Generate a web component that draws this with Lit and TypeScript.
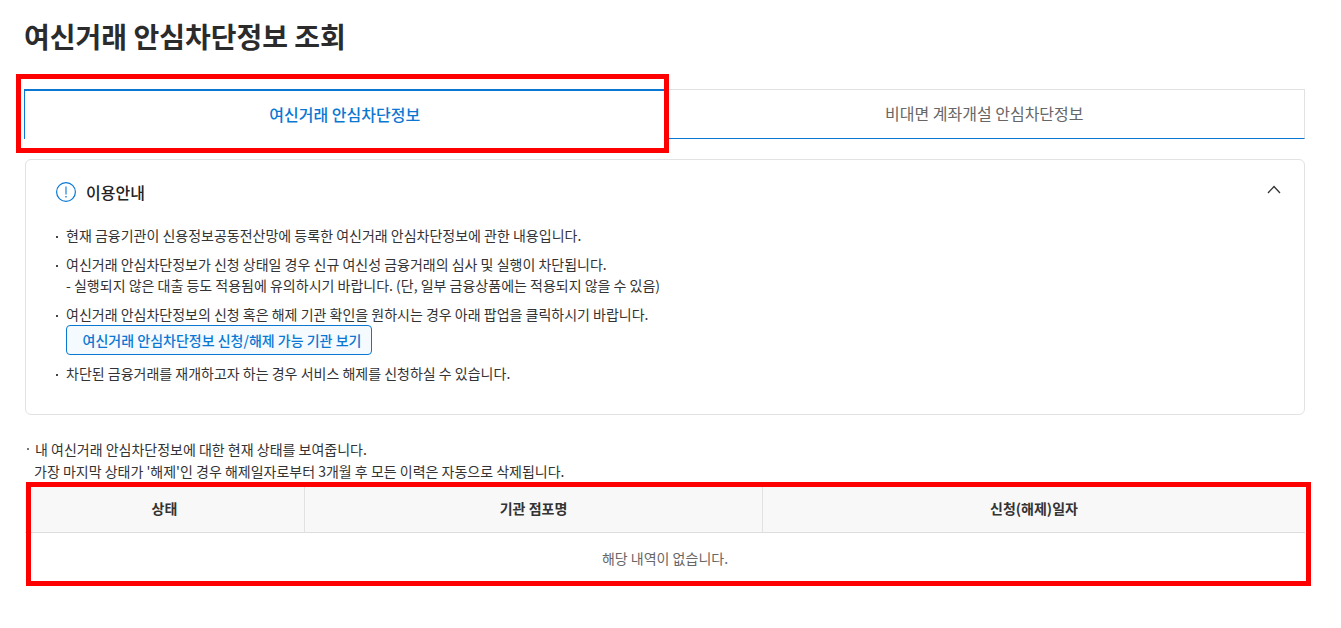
import { LitElement, html, css } from "lit";
import { customElement } from "lit/decorators.js";

@customElement("app-root")
export class AppRoot extends LitElement {
  static styles = css`
    :host { display: block; position: relative; width: 1341px; height: 628px; overflow: hidden; background: #fff;
      font-family: "Noto Sans CJK KR", "Noto Sans", sans-serif; color: #333; font-size: 14px; box-sizing: border-box; }
    .page { padding: 17px 36px 0 24px; }
    h1 { margin: 0; font-size: 28px; line-height: 38px; font-weight: 700; color: #2b2b2b; }
    .tabs { display: flex; margin-top: 34px; height: 50px; }
    .tab { flex: 1; display: flex; align-items: center; justify-content: center; font-size: 16px; box-sizing: border-box; padding-bottom: 2px; }
    .tab.on { color: #0a78d2; font-weight: 500; border-top: 2px solid #0a78d2; border-left: 1px solid #0a78d2; }
    .tab.off { color: #666; border-top: 1px solid #e2e2e2; border-right: 1px solid #e2e2e2; border-bottom: 1px solid #0a78d2; }
    .info { margin: 20px 0 0 1px; height: 256px; box-sizing: border-box; border: 1px solid #e2e2e2; border-radius: 6px; padding: 21px 30px 0 30px; }
    .info-head { display: flex; align-items: center; gap: 10px; height: 22px; }
    .info-head svg.i { width: 20px; height: 20px; flex: none; }
    .info-head b { font-size: 16px; font-weight: 500; color: #222; margin-top: -1px; }
    .info-head svg.c { margin-left: auto; width: 14px; height: 9px; margin-top: -5px; margin-right: -7px; }
    ul { list-style: none; margin: 22px 0 0; padding: 0; display: flex; flex-direction: column; gap: 8px; }
    li { position: relative; padding-left: 10px; line-height: 21px; color: #333; }
    li::before { content: ""; position: absolute; left: 0; top: 11px; width: 2px; height: 2px; background: #444; }
    .btn { display: inline-flex; align-items: center; justify-content: center; width: 306px; height: 30px; box-sizing: border-box; padding-left: 6px;
      border: 1px solid #0a78d2; border-radius: 4px; background: #f5faff; color: #0a78d2; font-size: 14px; font-weight: 500; }
    .note { margin: 23px 0 0 3px; line-height: 22px; color: #333; position: relative; padding-left: 7px; height: 47px; box-sizing: border-box; }
    .first { margin-left: 1px; }
    .note::before { content: ""; position: absolute; left: 0; top: 10px; width: 2px; height: 2px; background: #777; }
    .grid { margin-left: 1px; display: grid; grid-template-columns: 279px 458px 1fr; }
    .th { height: 48px; padding-bottom: 2px; background: #f8f8f8; border-bottom: 1px solid #ddd; display: flex; align-items: center; justify-content: center; font-weight: 700; font-size: 14px; color: #333; box-sizing: border-box; }
    .th + .th { border-left: 1px solid #e2e2e2; }
    .empty { grid-column: 1 / -1; height: 50px; display: flex; align-items: center; justify-content: center; color: #666; }
    .mark { position: absolute; border: 5px solid #f00; box-sizing: border-box; pointer-events: none; }
    .m1 { left: 16px; top: 74px; width: 653px; height: 79px; }
    .m2 { left: 26px; top: 482px; width: 1285px; height: 104px; }
  `;
  render() {
    return html`
      <div class="page">
        <h1>여신거래 안심차단정보 조회</h1>
        <div class="tabs">
          <div class="tab on">여신거래 안심차단정보</div>
          <div class="tab off">비대면 계좌개설 안심차단정보</div>
        </div>
        <section class="info">
          <div class="info-head">
            <svg class="i" viewBox="0 0 20 20" fill="none"><circle cx="10" cy="10" r="9.4" stroke="#0a78d2" stroke-width="1.2"/><path d="M10 4.5v8" stroke="#0a78d2" stroke-width="1.1"/><path d="M10 14v1.4" stroke="#0a78d2" stroke-width="1.3"/></svg>
            <b>이용안내</b>
            <svg class="c" viewBox="0 0 14 9" fill="none"><path d="M1 8l6-6.5L13 8" stroke="#333" stroke-width="1.3"/></svg>
          </div>
          <ul>
            <li>현재 금융기관이 신용정보공동전산망에 등록한 여신거래 안심차단정보에 관한 내용입니다.</li>
            <li>여신거래 안심차단정보가 신청 상태일 경우 신규 여신성 금융거래의 심사 및 실행이 차단됩니다.<br/>- 실행되지 않은 대출 등도 적용됨에 유의하시기 바랍니다. (단, 일부 금융상품에는 적용되지 않을 수 있음)</li>
            <li>여신거래 안심차단정보의 신청 혹은 해제 기관 확인을 원하시는 경우 아래 팝업을 클릭하시기 바랍니다.<br/><span class="btn">여신거래 안심차단정보 신청/해제 가능 기관 보기</span></li>
            <li>차단된 금융거래를 재개하고자 하는 경우 서비스 해제를 신청하실 수 있습니다.</li>
          </ul>
        </section>
        <div class="note"><span class="first">내 여신거래 안심차단정보에 대한 현재 상태를 보여줍니다.</span><br/>가장 마지막 상태가 '해제'인 경우 해제일자로부터 3개월 후 모든 이력은 자동으로 삭제됩니다.</div>
        <div class="grid">
          <div class="th">상태</div>
          <div class="th">기관 점포명</div>
          <div class="th">신청(해제)일자</div>
          <div class="empty">해당 내역이 없습니다.</div>
        </div>
      </div>
      <div class="mark m1"></div>
      <div class="mark m2"></div>
    `;
  }
}
